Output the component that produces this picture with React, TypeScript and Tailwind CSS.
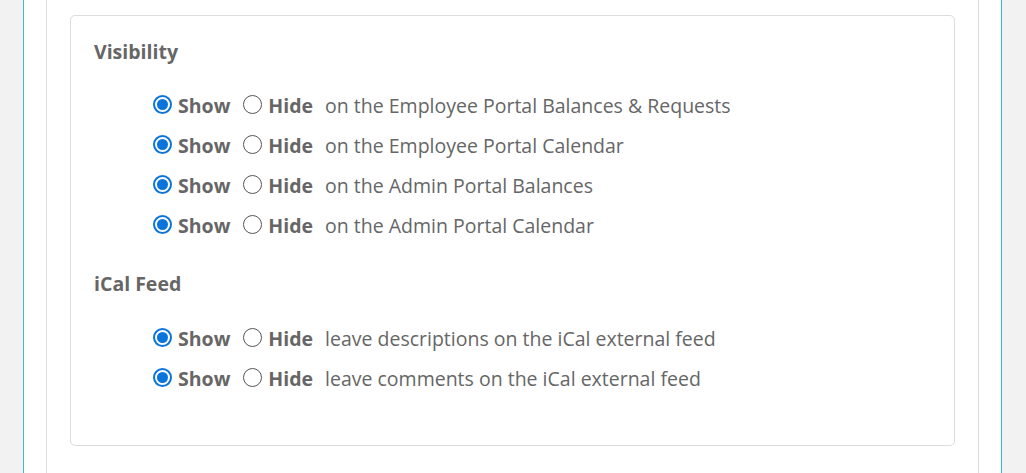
const visibilityRows = [
  "on the Employee Portal Balances & Requests",
  "on the Employee Portal Calendar",
  "on the Admin Portal Balances",
  "on the Admin Portal Calendar",
];

const icalRows = [
  "leave descriptions on the iCal external feed",
  "leave comments on the iCal external feed",
];

const Radio = ({ checked }: { checked: boolean }) =>
  checked ? (
    <span className="flex w-[19px] h-[19px] -translate-y-[2px] rounded-full border-2 border-[#0a74da] items-center justify-center shrink-0">
      <span className="w-[11px] h-[11px] rounded-full bg-[#0a74da]" />
    </span>
  ) : (
    <span className="block w-[19px] h-[19px] -translate-y-[2px] rounded-full border border-[#555] shrink-0" />
  );

const Row = ({ text }: { text: string }) => (
  <div className="flex items-center h-[40px]">
    <Radio checked />
    <span className="ml-[6px] font-bold">Show</span>
    <span className="ml-[13px]"><Radio checked={false} /></span>
    <span className="ml-[6px] font-bold">Hide</span>
    <span className="ml-[12px]">{text}</span>
  </div>
);

export default function App() {
  return (
    <div className="min-h-screen bg-[#f2f2f2] text-[#666] text-[19.5px]" style={{ fontFamily: '"Open Sans", sans-serif' }}>
      <div className="ml-[23px] w-[979px] min-h-screen bg-white border-x border-[#3ab8cf] px-[22px]">
        <div className="min-h-screen border-x border-[#dcdcdc] px-[23px] pt-[15px]">
          <div className="border border-[#dcdcdc] rounded-[5px] px-[23px] pt-[24px] pb-[46px]">
            <h3 className="font-bold leading-[24px]">Visibility</h3>
            <div className="pl-[59px] mt-[22px]">
              {visibilityRows.map((t) => (
                <Row key={t} text={t} />
              ))}
            </div>
            <h3 className="font-bold leading-[24px] mt-[26px]">iCal Feed</h3>
            <div className="pl-[59px] mt-[23px]">
              {icalRows.map((t) => (
                <Row key={t} text={t} />
              ))}
            </div>
          </div>
        </div>
      </div>
    </div>
  );
}
